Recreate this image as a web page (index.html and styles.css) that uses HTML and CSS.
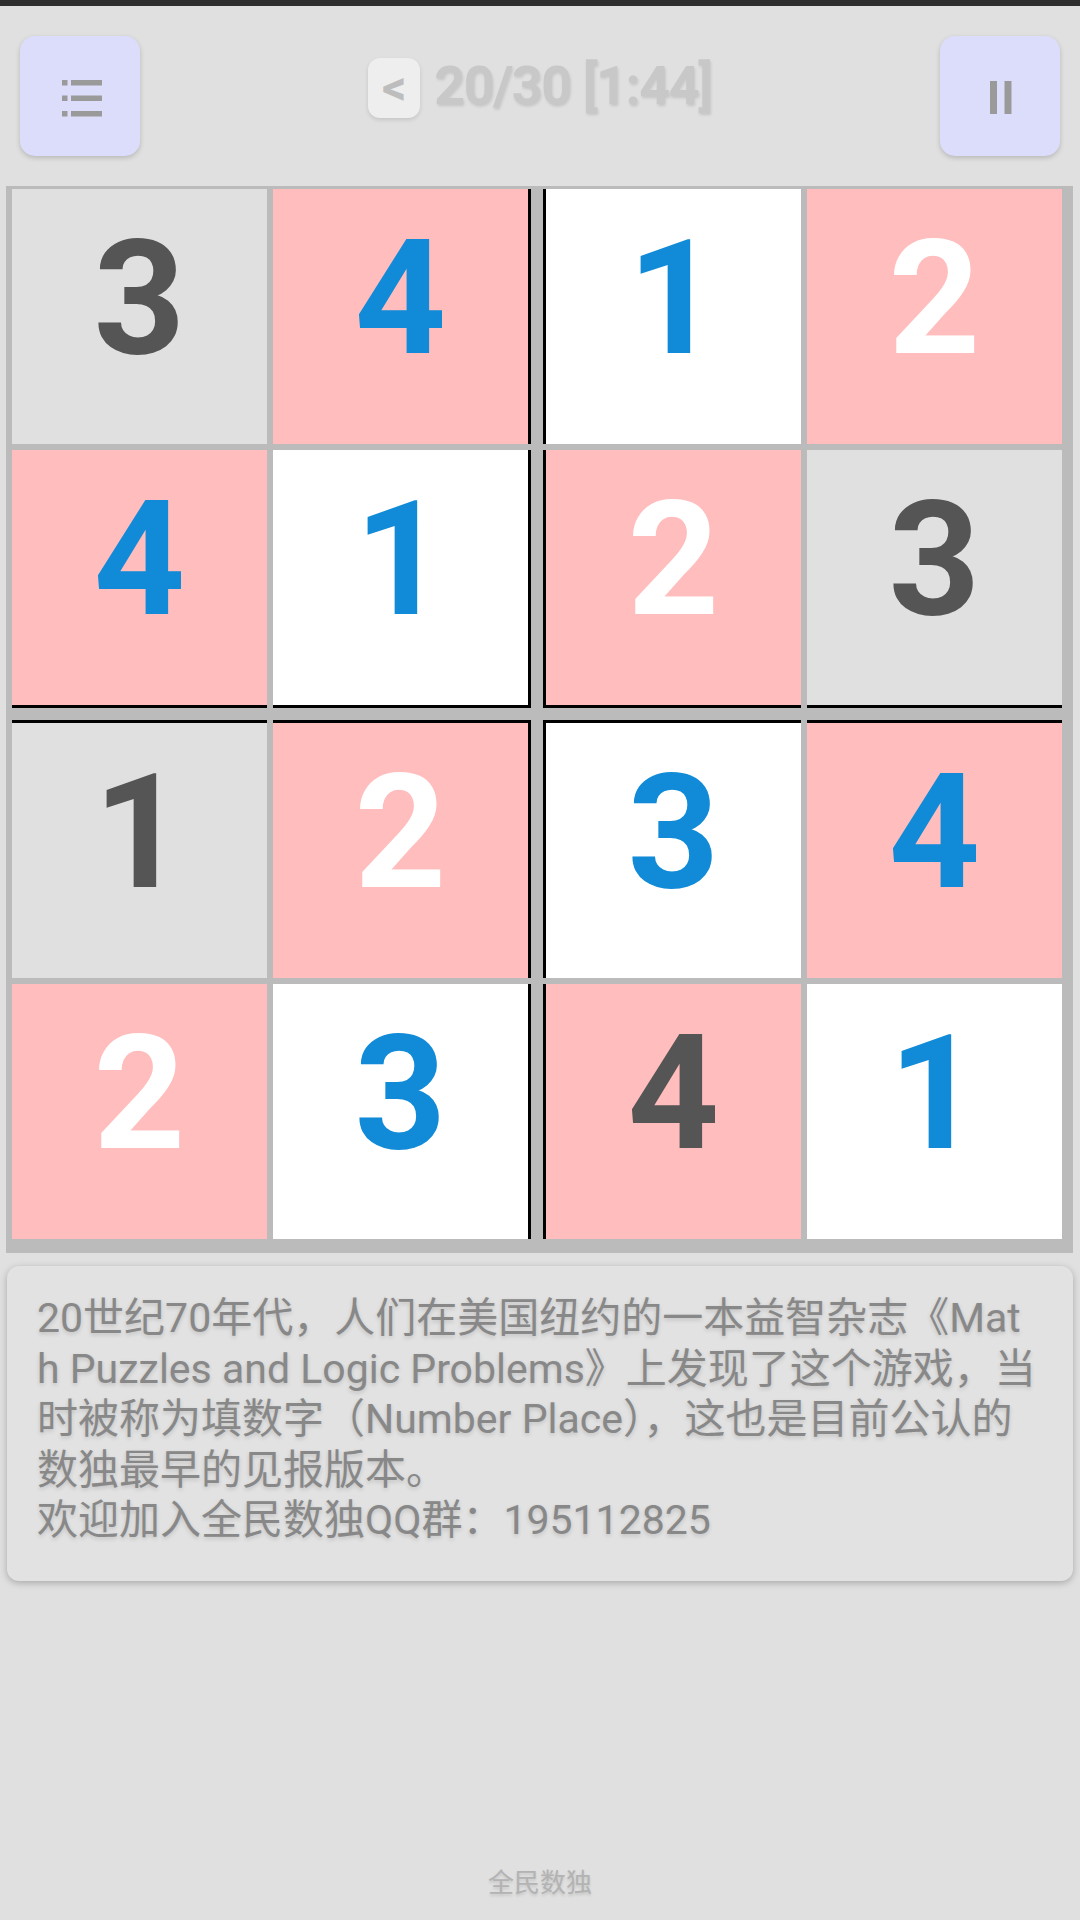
FILE: index.html
```html
<!DOCTYPE html>
<html lang="zh-CN">

<head>
    <meta charset="UTF-8">
    <meta name="viewport" content="width=device-width, initial-scale=1.0">
    <title>全民数独</title>
    <link rel="stylesheet" href="styles.css">
</head>

<body>
    <div class="status_bar"></div>

    <div class="top_bar">
        <div class="btn menu_btn">
            <svg width="40" height="37" viewBox="0 0 40 37">
                <rect x="0" y="0" width="5.5" height="5.5" fill="#9a9a9a"/>
                <rect x="9" y="0" width="31" height="5.5" fill="#9a9a9a"/>
                <rect x="0" y="15.5" width="5.5" height="5.5" fill="#9a9a9a"/>
                <rect x="9" y="15.5" width="31" height="5.5" fill="#9a9a9a"/>
                <rect x="0" y="31" width="5.5" height="5.5" fill="#9a9a9a"/>
                <rect x="9" y="31" width="31" height="5.5" fill="#9a9a9a"/>
            </svg>
        </div>
        <div class="level_box">
            <div class="back_btn">&lt;</div>
            <div class="level_text">20/30 [1:44]</div>
        </div>
        <div class="btn pause_btn">
            <svg width="22" height="33" viewBox="0 0 22 33">
                <rect x="0" y="0" width="7" height="33" fill="#9a9a9a"/>
                <rect x="14.5" y="0" width="7" height="33" fill="#9a9a9a"/>
            </svg>
        </div>
    </div>

    <div class="board">
        <div class="row">
            <div class="cell gray"><span class="dark">3</span></div>
            <div class="cell pink br"><span class="blue">4</span></div>
            <div class="cell white bl"><span class="blue">1</span></div>
            <div class="cell pink"><span class="light">2</span></div>
        </div>
        <div class="row row_end">
            <div class="cell pink bb"><span class="blue">4</span></div>
            <div class="cell white br bb"><span class="blue">1</span></div>
            <div class="cell pink bl bb"><span class="light">2</span></div>
            <div class="cell gray bb"><span class="dark">3</span></div>
        </div>
        <div class="row">
            <div class="cell gray bt"><span class="dark">1</span></div>
            <div class="cell pink br bt"><span class="light">2</span></div>
            <div class="cell white bl bt"><span class="blue">3</span></div>
            <div class="cell pink bt"><span class="blue">4</span></div>
        </div>
        <div class="row">
            <div class="cell pink"><span class="light">2</span></div>
            <div class="cell white br"><span class="blue">3</span></div>
            <div class="cell pink bl"><span class="dark">4</span></div>
            <div class="cell white"><span class="blue">1</span></div>
        </div>
    </div>

    <div class="info_box">
        <p>20世纪70年代，人们在美国纽约的一本益智杂志《Math Puzzles and Logic Problems》上发现了这个游戏，当时被称为填数字（Number Place），这也是目前公认的数独最早的见报版本。</p>
        <p>欢迎加入全民数独QQ群：195112825</p>
    </div>

    <div class="footer">全民数独</div>
</body>

</html>
```

FILE: styles.css
```css
* {
    margin: 0;
    padding: 0;
    box-sizing: content-box;
}

body {
    background-color: #e0e0e0;
    font-family: Roboto, "Noto Sans CJK SC", sans-serif;
    min-height: 1920px;
    display: flex;
    flex-direction: column;
}

.status_bar {
    height: 6px;
    background-color: #2f2f2f;
}

/* top bar */
.top_bar {
    display: flex;
    justify-content: space-between;
    align-items: flex-start;
    padding: 30px 20px 30px;
}
.btn {
    width: 120px;
    height: 120px;
    background-color: #dcdcfb;
    border-radius: 15px;
    box-shadow: 0 2px 5px rgba(0, 0, 0, .18);
    display: flex;
    justify-content: center;
    align-items: center;
}
.menu_btn svg {
    margin: 4px 0 0 4px;
}
.pause_btn svg {
    margin: 3px 0 0 2px;
}
.level_box {
    display: flex;
    align-items: center;
    gap: 14px;
    margin-top: 22px;
}
.back_btn {
    width: 52px;
    height: 60px;
    background-color: #eeeeee;
    border-radius: 12px;
    box-shadow: 0 2px 4px rgba(0, 0, 0, .12);
    color: #bdbdbd;
    font-size: 48px;
    font-weight: 700;
    line-height: 60px;
    text-align: center;
}
.level_text {
    font-size: 54px;
    font-weight: 700;
    letter-spacing: -1.5px;
    color: #c8c8c8;
    text-shadow: 1px 2px 3px rgba(0, 0, 0, .12);
    margin-top: -6px;
}

/* board */
.board {
    align-self: flex-start;
    margin-left: 6px;
    padding: 3px 11px 14px 6px;
    background-color: #bbbbbb;
    display: flex;
    flex-direction: column;
    gap: 6px;
}
.row {
    display: flex;
    gap: 6px;
}
.row_end {
    margin-bottom: 6px;
}
.cell {
    width: 255px;
    height: 255px;
    display: flex;
    justify-content: center;
    align-items: center;
    font-size: 160px;
    font-weight: 700;
}
.cell span {
    margin-bottom: 36px;
}
.gray { background-color: #e0e0e0; }
.pink { background-color: #ffbdbd; }
.white { background-color: #ffffff; }
.dark { color: #555555; }
.blue { color: #118bd7; }
.light { color: #ffffff; }

.br {
    border-right: 3px solid #000;
    margin-right: 6px;
}
.bl { border-left: 3px solid #000; }
.bb { border-bottom: 3px solid #000; }
.bt { border-top: 3px solid #000; }

/* info */
.info_box {
    margin: 13px 7px 0;
    padding: 27px 34px 35px 30px;
    background-color: #e2e2e2;
    border-radius: 12px;
    box-shadow: 0 2px 7px rgba(0, 0, 0, .25);
    font-size: 41px;
    line-height: 50.5px;
    color: #888888;
    text-shadow: 0 2px 4px rgba(0, 0, 0, .15);
    word-break: break-all;
}

.footer {
    margin-top: auto;
    padding-bottom: 18px;
    text-align: center;
    font-size: 26px;
    line-height: 38px;
    color: #b3b3b3;
    text-shadow: 0 2px 3px rgba(0, 0, 0, .12);
}
```
